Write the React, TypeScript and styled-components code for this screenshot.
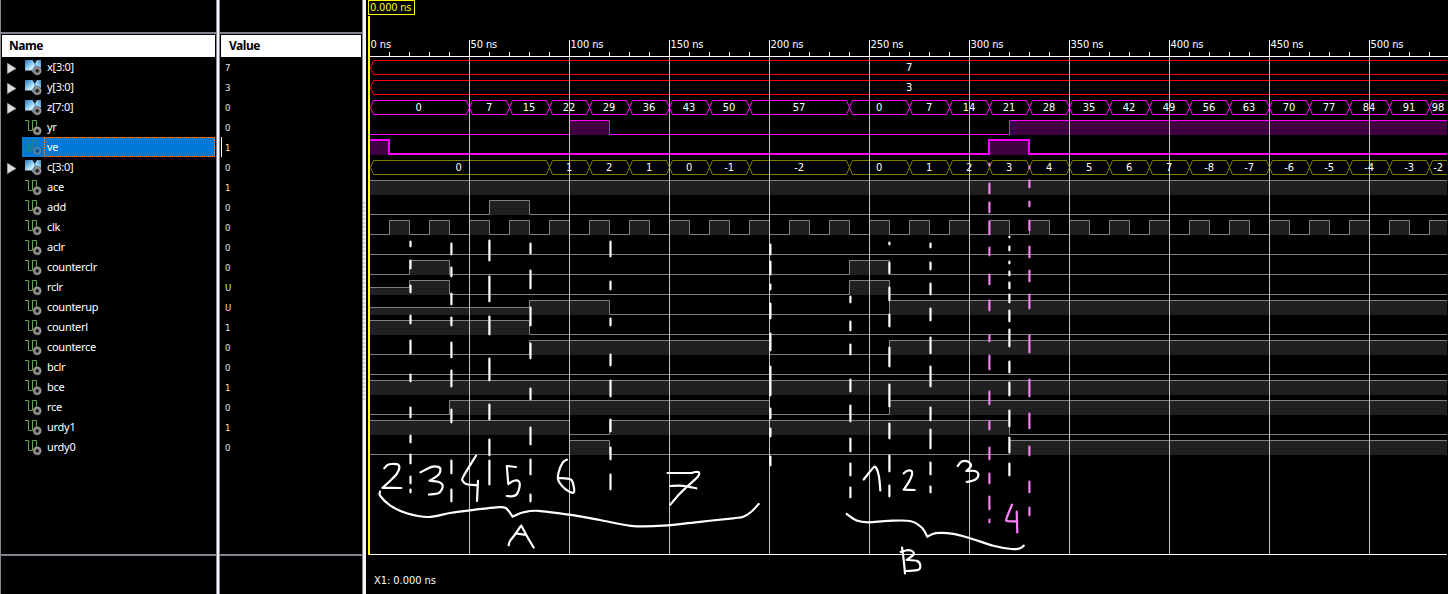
import React from "react";
import styled, { createGlobalStyle } from "styled-components";

const Global = createGlobalStyle`
  html, body { margin: 0; background: #000; overflow: hidden; }
  * { box-sizing: border-box; }
`;

const UI_FONT = `"DejaVu Sans Condensed", "DejaVu Sans", sans-serif`;

const Shell = styled.div`
  display: flex;
  width: 1448px;
  height: 594px;
  background: #000;
  color: #fff;
  font: 11px ${UI_FONT};
  font-stretch: condensed;
  overflow: hidden;
`;

const Column = styled.section<{ $w: number; $leftEdge?: boolean }>`
  display: flex;
  flex-direction: column;
  flex: none;
  width: ${(p) => p.$w}px;
  border-left: ${(p) => (p.$leftEdge ? "1px solid #868a92" : "0")};
`;

const ColumnTop = styled.div`
  height: 34px;
  border-bottom: 2px solid #7f838c;
`;

const Header = styled.div<{ $pad: number }>`
  height: 22px;
  margin: 1px 1px 0 1px;
  padding-left: ${(p) => p.$pad}px;
  background: #fff;
  color: #000;
  font: bold 12px/22px "Noto Sans", sans-serif;
  letter-spacing: -0.45px;
`;

const Rows = styled.div`
  height: 499px;
  border-bottom: 2px solid #7f838c;
`;

const NameRow = styled.div`
  display: flex;
  height: 20px;
  padding-right: 1px;
`;

const Expander = styled.div`
  width: 21px;
  height: 20px;
  padding: 5px 0 0 5px;
  svg { display: block; }
`;

const NameCell = styled.div<{ $selected?: boolean }>`
  display: flex;
  flex: 1;
  background: ${(p) => (p.$selected ? "#0078d7" : "transparent")};
`;

const IconBox = styled.div`
  width: 22px;
  padding: 2px 0 0 3px;
  svg { display: block; }
`;

const NameText = styled.div<{ $selected?: boolean }>`
  flex: 1;
  height: 20px;
  padding-left: 2px;
  border: 1px dotted ${(p) => (p.$selected ? "#ff8a2a" : "transparent")};
  font: 11px/18px "Noto Sans", "Open Sans", sans-serif;
  letter-spacing: -0.28px;
`;

const ValueRow = styled.div<{ $selected?: boolean }>`
  height: 20px;
  margin-left: 1px;
  padding-left: 3px;
  border-left: 1px solid ${(p) => (p.$selected ? "#fff" : "transparent")};
  color: #e6e6e6;
  font: 9.5px/21px ${UI_FONT};
  font-stretch: condensed;
`;

const Splitter = styled.div<{ $rightEdge?: boolean }>`
  display: flex;
  flex: none;
  align-items: center;
  width: 4px;
  border: solid #868a92;
  border-width: 0 ${(p) => (p.$rightEdge ? 1 : 0)}px 0 1px;
  background: #f4f4f6;
`;

const Grip = styled.div`
  width: 2px;
  height: 198px;
  margin-top: 8px;
  background: repeating-linear-gradient(#d0d0d4 0 2px, #f4f4f6 2px 4px);
`;

const WavePanel = styled.section`
  display: flex;
  flex: 1;
  flex-direction: column;
  padding-left: 2px;
`;

const CursorLabel = styled.div`
  width: 47px;
  height: 15px;
  padding-left: 1px;
  border: 1px solid #ff0;
  color: #ff0;
  line-height: 13px;
  letter-spacing: -0.2px;
  white-space: nowrap;
`;

const Plot = styled.svg`
  display: block;
  flex: none;
  overflow: visible;
`;

const Footer = styled.div`
  padding: 19px 0 0 6px;
  line-height: 14px;
  letter-spacing: -0.05px;
`;

type Level = "h" | "l" | "m";
type Signal = {
  name: string;
  value: string;
  color: string;
  bus?: [string, number][];
  wave?: [Level, number][];
  fill?: string;
  thick?: boolean;
};

const END = 1447;
const GRAY = "#808080";
const steps = (labels: string[], from: number): [string, number][] =>
  labels.map((l, i) => [l, Math.min(from + 40 * (i + 1), END)]);

const zBus: [string, number][] = [
  ["0", 469], ["7", 509], ["15", 549], ["22", 589], ["29", 629], ["36", 669], ["43", 709], ["50", 749],
  ["57", 849], ["0", 909],
  ...steps(["7", "14", "21", "28", "35", "42", "49", "56", "63", "70", "77", "84", "91", "98"], 909),
];
const cBus: [string, number][] = [
  ["0", 549], ["1", 589], ["2", 629], ["1", 669], ["0", 709], ["-1", 749], ["-2", 849], ["0", 909],
  ...steps(["1", "2", "3", "4", "5", "6", "7", "-8", "-7", "-6", "-5", "-4", "-3", "-2"], 909),
];
const clock: [Level, number][] = [];
for (let x = 389, hi = false; x <= 1449; x += 20, hi = !hi) clock.push([hi ? "h" : "l", Math.min(x, END)]);

const bit = (name: string, value: string, wave: [Level, number][], extra: Partial<Signal> = {}): Signal => ({
  name, value, wave, color: GRAY, fill: "#202020", ...extra,
});
const MAG = { color: "#f0f", fill: "#400040" };

const signals: Signal[] = [
  { name: "x[3:0]", value: "7", color: "#f00", bus: [["7", END]] },
  { name: "y[3:0]", value: "3", color: "#f00", bus: [["3", END]] },
  { name: "z[7:0]", value: "0", color: "#f0f", bus: zBus },
  bit("yr", "0", [["l", 569], ["h", 609], ["l", 1009], ["h", END]], MAG),
  bit("ve", "1", [["h", 389], ["l", 989], ["h", 1029], ["l", END]], { ...MAG, thick: true }),
  { name: "c[3:0]", value: "0", color: "#808000", bus: cBus },
  bit("ace", "1", [["h", END]]),
  bit("add", "0", [["l", 489], ["h", 529], ["l", END]]),
  bit("clk", "0", clock),
  bit("aclr", "0", [["l", END]]),
  bit("counterclr", "0", [["l", 409], ["h", 449], ["l", 849], ["h", 889], ["l", END]]),
  bit("rclr", "U", [["m", 409], ["h", 449], ["l", 849], ["h", 889], ["l", END]]),
  bit("counterup", "U", [["m", 529], ["h", 609], ["l", 889], ["h", END]]),
  bit("counterl", "1", [["h", 529], ["l", END]]),
  bit("counterce", "0", [["l", 529], ["h", 769], ["l", 889], ["h", END]]),
  bit("bclr", "0", [["l", END]]),
  bit("bce", "1", [["h", END]]),
  bit("rce", "0", [["l", 449], ["h", 769], ["l", 889], ["h", END]]),
  bit("urdy1", "1", [["h", 569], ["l", 609], ["h", 1009], ["l", END]]),
  bit("urdy0", "0", [["l", 569], ["h", 609], ["l", 1009], ["h", END]]),
];

const Gear = ({ dim }: { dim?: boolean }) => (
  <g opacity={dim ? 0.45 : 1}>
    <circle cx="12.2" cy="11.8" r="4.6" fill="#4a4a4a" />
    <circle cx="12.2" cy="11.8" r="3.5" fill="#7a7a7a" stroke="#b0b0b0" strokeWidth="0.9" />
    <path d="M10.6 11.8h3.2M12.2 10.2v3.2" stroke="#0a0a0a" strokeWidth="1.3" />
  </g>
);

const BusIcon = () => (
  <svg width="18" height="17">
    <defs>
      <linearGradient id="busLeft" x1="0" y1="0" x2="0.7" y2="1">
        <stop offset="0" stopColor="#2b78b8" />
        <stop offset="0.45" stopColor="#7fc4ee" />
        <stop offset="0.75" stopColor="#d4f0fd" />
        <stop offset="1" stopColor="#4ba6e2" />
      </linearGradient>
      <linearGradient id="busRight" x1="0" y1="1" x2="1" y2="0">
        <stop offset="0" stopColor="#2d8fd8" />
        <stop offset="0.55" stopColor="#9ad6f7" />
        <stop offset="1" stopColor="#3a88c4" />
      </linearGradient>
    </defs>
    <path d="M0 1H7.5L9.8 4.6V14H8L6.5 11.5H0Z" fill="url(#busLeft)" />
    <path d="M9.5 4.6L12 1H16V13H9.5Z" fill="url(#busRight)" />
    <path d="M7.5 0.8H12L9.8 4.8Z" fill="#12202c" />
    <Gear />
  </svg>
);

const BitIcon = ({ selected }: { selected?: boolean }) => (
  <svg width="18" height="17">
    <path d="M0 1.5H3.5V11.5H7.5V1.5H11.5V8" fill="none" stroke={selected ? "#33807f" : "#6aa84f"} strokeWidth="1" />
    <Gear dim={selected} />
  </svg>
);

const Arrow = () => (
  <svg width="11" height="13">
    <path d="M1.4 1.2L10 6.6L1.4 11.6Z" fill="#dcdcdc" stroke="#a8a8a8" strokeWidth="0.6" />
  </svg>
);

const Label = styled.text`
  fill: #fff;
  font: 11px ${UI_FONT};
  letter-spacing: -0.1px;
`;

const BusTrace = ({ s, cy }: { s: Signal; cy: number }) => {
  let x = 370;
  const t = cy - 6.5;
  const b = cy + 7.5;
  const m = cy + 0.5;
  return (
    <g stroke={s.color} fill="none">
      {s.bus!.map(([, end], i) => {
        const a = x + 0.5;
        x = end;
        const left = `${a + 3} ${t}L${a} ${m}L${a + 3} ${b}`;
        const e = end + 0.5;
        return end === END ? (
          <path key={i} d={`M${END} ${t}L${left}H${END}`} />
        ) : (
          <path key={i} d={`M${left}H${e - 3}L${e} ${m}L${e - 3} ${t}Z`} />
        );
      })}
    </g>
  );
};

const BusLabels = ({ s, cy }: { s: Signal; cy: number }) => {
  let x = 369;
  return (
    <>
      {s.bus!.map(([label, end], i) => {
        const shift = s.bus!.length === 1 ? 1 : i === 0 ? -0.5 : 0;
        const mid = (x + end) / 2 + shift;
        x = end;
        return (
          <Label key={i} x={mid} y={cy + 4} textAnchor="middle">
            {label}
          </Label>
        );
      })}
    </>
  );
};

const BitTrace = ({ s, cy }: { s: Signal; cy: number }) => {
  const off = s.thick ? 0 : 0.5;
  const y = { h: cy - 7 + off, m: cy + 0.5, l: cy + 7 + off };
  let x = 370;
  let d = "";
  const blocks: React.ReactNode[] = [];
  s.wave!.forEach(([lv, end], i) => {
    const e = end === END ? END : end + off;
    d += `${i ? "V" : "M370 "}${y[lv]}H${e}`;
    if (lv !== "l")
      blocks.push(<rect key={i} x={x} y={y[lv]} width={end - x} height={cy + 8 - y[lv]} fill={s.fill} />);
    x = end;
  });
  return (
    <g>
      {blocks}
      <path d={d} fill="none" stroke={s.color} strokeWidth={s.thick ? 2 : 1} />
    </g>
  );
};

/* Hand-drawn phase separators: x, then start/end pairs of every dash. */
const marks: [number, number[]][] = [
  [410.5, [241, 247, 260, 269, 285, 293, 315, 324, 340, 354, 374, 382, 407, 418, 435, 443, 454, 464, 476, 484, 489, 493]],
  [451.4, [243, 255, 267, 277, 293, 305, 317, 326, 342, 358, 370, 387, 409, 423, 460, 474, 489, 502]],
  [489.4, [240, 261, 276, 302, 316, 335, 358, 381, 404, 420, 439, 456, 460, 485]],
  [530.5, [243, 254, 270, 289, 307, 326, 343, 359, 388, 400, 427, 445, 459, 475, 494, 502]],
  [610.5, [241, 257, 281, 290, 318, 326, 354, 366, 380, 397, 419, 432, 447, 460, 474, 490]],
  [770.4, [244, 255, 261, 275, 284, 290, 303, 319, 333, 351, 366, 396, 408, 419, 428, 437, 456, 466]],
  [850.4, [296, 303, 321, 331, 344, 355, 379, 392, 405, 422, 438, 452, 463, 476, 487, 498]],
  [889.4, [242, 245, 262, 274, 287, 301, 314, 327, 347, 367, 384, 407, 423, 439, 455, 472, 485, 497]],
  [930.5, [243, 248, 262, 270, 283, 295, 308, 321, 337, 354, 366, 387, 407, 421, 429, 449, 462, 475, 486, 493]],
  [1009.4, [236, 238, 246, 251, 261, 264, 271, 276, 282, 289, 294, 303, 310, 322, 329, 347, 361, 373, 382, 396, 410, 427, 437, 453, 463, 476]],
];
const pinkMarks: [number, number[]][] = [
  [989.4, [163, 166, 183, 194, 202, 213, 221, 235, 247, 256, 274, 285, 300, 311, 335, 342, 355, 370, 391, 405, 421, 430, 447, 460, 473, 484, 496, 510, 519, 523]],
  [1029.4, [166, 169, 180, 188, 201, 207, 220, 231, 246, 258, 270, 282, 294, 309, 335, 353, 379, 397, 413, 429, 446, 456, 481, 493, 507, 516]],
];

const dashes = (list: [number, number[]][]) =>
  list
    .map(([x, ys]) => ys.map((y, i) => (i % 2 ? `V${y - 0.7}` : `M${x} ${y + 0.7}`)).join(""))
    .join("");

/* Smooth pen stroke through a list of points. */
const pen = (p: number[]) => {
  const n = p.length / 2;
  const at = (i: number) => {
    const k = Math.max(0, Math.min(n - 1, i));
    return [p[2 * k], p[2 * k + 1]];
  };
  let d = `M${p[0]} ${p[1]}`;
  for (let i = 0; i < n - 1; i++) {
    const [a, b, c, e] = [at(i - 1), at(i), at(i + 1), at(i + 2)];
    d += `C${b[0] + (c[0] - a[0]) / 6} ${b[1] + (c[1] - a[1]) / 6} ${c[0] - (e[0] - b[0]) / 6} ${c[1] - (e[1] - b[1]) / 6} ${c[0]} ${c[1]}`;
  }
  return d;
};

const strokes: number[][] = [
  [384.3, 468.3, 387.5, 465, 392, 464, 398, 464.5, 399.3, 468, 396.7, 474, 390, 481, 382.5, 487.8],
  [382.5, 487.8, 401.3, 488],
  [420.5, 472.3, 431.7, 466.9, 438, 466.9, 440.5, 469.5, 438.3, 475, 429.5, 480.7],
  [429.5, 480.7, 438, 481.8, 442.3, 484.5, 442, 489, 438.3, 493.3, 429, 494.5],
  [476, 455.7, 463.3, 476.5, 462.8, 481, 467, 484.3, 477.5, 485.2],
  [478, 480.8, 477, 501],
  [516, 467, 506.8, 466],
  [506.8, 466, 508.3, 484],
  [508.3, 484, 514, 480.7, 519, 481.5, 519.5, 487, 517, 494, 513, 496.2, 506.7, 496],
  [567, 459.7, 562.7, 462.7, 558.6, 472.5, 558.2, 480, 562.3, 486.3, 569, 491.6, 573.8, 492.3, 573.6, 486, 570.7, 479.4, 559, 478],
  [667.5, 473, 692, 473],
  [692, 473, 695, 472, 699, 472.5, 697.5, 477, 686.7, 487, 679, 494.5, 670.3, 504.7],
  [670.3, 486, 683, 485.8, 696.3, 488.3],
  [380, 491.7, 380.3, 496, 390, 505.3, 406.7, 513.3, 428.3, 517, 450, 513, 475, 509.7, 496.7, 507.3, 505.7, 508, 512.7, 516.7],
  [512.7, 516.7, 523.3, 512.3, 538.3, 510.8, 569.3, 514.7, 600, 520, 630.7, 525.8, 663.3, 525.7, 700, 521.8, 733, 518.3, 743.3, 516.8, 751, 512, 758.7, 504],
  [508.7, 545.3, 510, 541, 515, 534.5, 520.5, 526.5, 522, 527, 528, 538, 533.7, 547.5],
  [515.3, 533.5, 525.9, 534.8],
  [863.7, 479.5, 873, 468, 876, 467.6, 879, 476.7, 880.3, 490.3],
  [903.7, 473.3, 907.3, 470.7, 911.5, 471, 911.8, 475.5, 908.5, 482.5, 903.7, 489.7],
  [903.7, 489.7, 914.7, 490],
  [957.7, 466, 961.7, 461.5, 968.3, 461.7, 971, 466, 966.3, 471],
  [966.3, 471, 975, 471, 978.4, 474.5, 975.5, 479.5, 966.7, 482],
  [846.7, 514, 856.7, 520.5, 868.3, 522.3, 888.3, 520.9, 910, 521, 921.7, 527.5, 927.3, 536.7],
  [927.3, 536.7, 936, 533.2, 953.3, 533.9, 970, 538.2, 993.3, 545.7, 1011.7, 549, 1020, 548.3, 1023.7, 545.7],
  [902, 547.5, 903.7, 560, 905, 573.3],
  [900.7, 552, 908, 550.2, 913, 551.7, 913.2, 555, 906.7, 559.9],
  [906.7, 559.9, 917, 560.9, 920.2, 565, 918.5, 569.8, 906.7, 571],
];
const pinkStrokes: number[][] = [
  [1012, 504.7, 1006.7, 518, 1007.3, 521, 1017.3, 521.3],
  [1016.7, 511.7, 1017.3, 532.5],
];

const majors = Array.from({ length: 10 }, (_, i) => 469 + i * 100);
const minors = Array.from({ length: 54 }, (_, i) => 389 + i * 20).filter((x) => x < END && (x - 369) % 100);

export default function App() {
  return (
    <Shell>
      <Global />
      <Column $w={216} $leftEdge>
        <ColumnTop />
        <Header $pad={7}>Name</Header>
        <Rows>
          {signals.map((s, i) => {
            const selected = s.name === "ve";
            return (
              <NameRow key={i}>
                <Expander>{s.bus && <Arrow />}</Expander>
                <NameCell $selected={selected}>
                  <IconBox>{s.bus ? <BusIcon /> : <BitIcon selected={selected} />}</IconBox>
                  <NameText $selected={selected}>{s.name}</NameText>
                </NameCell>
              </NameRow>
            );
          })}
        </Rows>
      </Column>
      <Splitter $rightEdge />
      <Column $w={142}>
        <ColumnTop />
        <Header $pad={8}>Value</Header>
        <Rows>
          {signals.map((s, i) => (
            <ValueRow key={i} $selected={s.name === "ve"}>
              {s.value}
            </ValueRow>
          ))}
        </Rows>
      </Column>
      <Splitter>
        <Grip />
      </Splitter>
      <WavePanel>
        <CursorLabel>0.000 ns</CursorLabel>
        <Plot width="1080" height="540" viewBox="368 15 1080 540">
          {signals.map((s, i) =>
            s.bus ? <BusTrace key={i} s={s} cy={67 + 20 * i} /> : <BitTrace key={i} s={s} cy={67 + 20 * i} />
          )}
          <path d={majors.map((x) => `M${x + 0.5} 57V554`).join("")} stroke="#c0c0c0" />
          <path
            d={"M370 56.5H1448M370 554.5H1447" + majors.map((x) => `M${x + 0.5} 40V57`).join("") + minors.map((x) => `M${x + 0.5} 52V56`).join("")}
            stroke="#fff"
          />
          {[369, ...majors].map((x, i) => (
            <Label key={x} x={x + 1.5} y={48}>
              {i * 50} ns
            </Label>
          ))}
          {signals.map((s, i) => s.bus && <BusLabels key={i} s={s} cy={67 + 20 * i} />)}
          <rect x="368" y="16" width="2" height="539" fill="#ff0" />
          <g fill="none" strokeWidth="2.2" strokeLinecap="round" strokeLinejoin="round">
            <path d={dashes(marks)} stroke="#fff" />
            <path d={dashes(pinkMarks)} stroke="#ee82ee" />
            <path d={strokes.map(pen).join("")} stroke="#fff" />
            <path d={pinkStrokes.map(pen).join("")} stroke="#ff80ff" />
          </g>
        </Plot>
        <Footer>X1: 0.000 ns</Footer>
      </WavePanel>
    </Shell>
  );
}
